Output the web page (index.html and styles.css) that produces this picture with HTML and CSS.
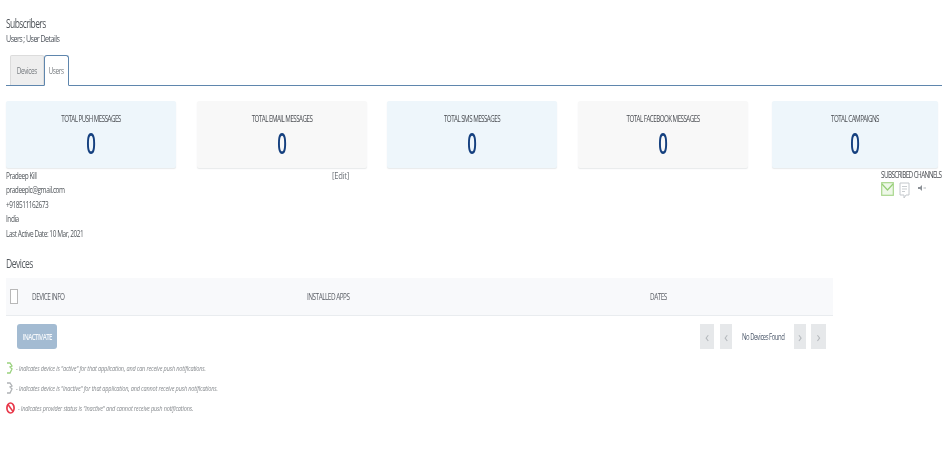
FILE: index.html
```html
<!DOCTYPE html>
<html lang="en">
<head>
<meta charset="utf-8">
<title>Subscribers</title>
<link rel="stylesheet" href="styles.css">
</head>
<body>
<main class="page">
  <header class="head">
    <h1 class="title">Subscribers</h1>
    <div class="crumb">Users ; User Details</div>
  </header>
  <nav class="tabs">
    <a class="tab"><span class="tab-text">Devices</span></a>
    <a class="tab active"><span class="tab-text">Users</span></a>
  </nav>
  <section class="cards">
    <div class="card blue"><div class="card-label">TOTAL PUSH MESSAGES</div><div class="card-num">0</div></div>
    <div class="card grey"><div class="card-label">TOTAL EMAIL MESSAGES</div><div class="card-num">0</div></div>
    <div class="card blue"><div class="card-label">TOTAL SMS MESSAGES</div><div class="card-num">0</div></div>
    <div class="card grey"><div class="card-label">TOTAL FACEBOOK MESSAGES</div><div class="card-num">0</div></div>
    <div class="card blue last"><div class="card-label">TOTAL CAMPAIGNS</div><div class="card-num">0</div></div>
  </section>
  <section class="info">
    <div class="details">
      <div>Pradeep Kill</div>
      <div>pradeeplc@gmail.com</div>
      <div>+918511162673</div>
      <div>India</div>
      <div>Last Active Date: 10 Mar, 2021</div>
    </div>
    <div class="edit">[Edit]</div>
    <div class="channels">
      <div class="channels-label">SUBSCRIBED CHANNELS</div>
      <div class="channels-icons">
        <svg width="13" height="14" viewBox="0 0 13 14"><rect x="0.7" y="0.7" width="11.600" height="12.600" fill="#eef8e8" stroke="#a8d68c" stroke-width="1.200"/><path d="M1 2l5.500 6L12 2" fill="none" stroke="#96ce76" stroke-width="1.200"/></svg>
        <svg width="11" height="17" viewBox="0 0 11 17"><path d="M1 1h9v12H7l-2 3v-3H1z" fill="#fff" stroke="#c4c8cc"/><path d="M3 4.500h5M3 7h5M3 9.500h3" stroke="#c9cdd0"/></svg>
        <svg class="speaker" width="8" height="6" viewBox="0 0 8 6"><path d="M0 2h2l2-2v6L2 4H0z" fill="#8b9096"/><path d="M5.500 3H8" stroke="#b5b9bd"/></svg>
      </div>
    </div>
  </section>
  <h2 class="section-title">Devices</h2>
  <section class="table">
    <div class="check"></div>
    <div class="col col-info">DEVICE INFO</div>
    <div class="col col-apps">INSTALLED APPS</div>
    <div class="col">DATES</div>
  </section>
  <section class="actions">
    <button class="btn"><span class="btn-text">INACTIVATE</span></button>
    <div class="pager">
      <span class="pg first">&#8249;</span>
      <span class="pg">&#8249;</span>
      <span class="pg-text"><span class="pg-label">No Devices Found</span></span>
      <span class="pg">&#8250;</span>
      <span class="pg final">&#8250;</span>
    </div>
  </section>
  <section class="legend">
    <div class="legend-row">
      <svg width="9" height="12" viewBox="0 0 9 12"><path d="M1 1h3l2 3-2 1 2 2-2 4H1" fill="none" stroke="#9ad27e" stroke-width="1.300"/></svg>
      <span class="legend-text">- Indicates device is "active" for that application, and can receive push notifications.</span>
    </div>
    <div class="legend-row">
      <svg width="9" height="12" viewBox="0 0 9 12"><path d="M1 1h3l2 3-2 1 2 2-2 4H1" fill="none" stroke="#b0b3b6" stroke-width="1.300"/></svg>
      <span class="legend-text">- Indicates device is "inactive" for that application, and cannot receive push notifications.</span>
    </div>
    <div class="legend-row">
      <svg width="9" height="12" viewBox="0 0 9 12"><ellipse cx="4.500" cy="6" rx="3.600" ry="5" fill="#fff" stroke="#e8384a" stroke-width="1.700"/><path d="M2 2.500l5 7" stroke="#e8384a" stroke-width="1.500"/></svg>
      <span class="legend-text provider">- Indicates provider status is "inactive" and cannot receive push notifications.</span>
    </div>
  </section>
</main>
</body>
</html>
```
FILE: styles.css
```css
* { box-sizing: border-box; }
html, body { margin: 0; padding: 0; background: #fff; }
body {
  width: 950px;
  height: 461px;
  overflow: hidden;
  font-family: "Open Sans", "Liberation Sans", sans-serif;
  color: #44494e;
}
.page { padding: 16px 8px 0 6px; filter: blur(0.35px); }
.head { height: 38px; }
.title {
  margin: 0;
  font-size: 13px;
  line-height: 15px;
  font-weight: 400;
  letter-spacing: -0.9px;
  color: #50555a;
  transform: scaleX(.65);
  transform-origin: left center;
  white-space: nowrap;
}
.crumb {
  margin-top: 2px;
  font-size: 9.500px;
  line-height: 12px;
  letter-spacing: -0.75px;
  color: #4a5058;
  transform: scaleX(.75);
  transform-origin: left center;
  white-space: nowrap;
}
.tabs {
  display: flex;
  height: 32px;
  padding-top: 1px;
  border-bottom: 1.500px solid #5f86ad;
}
.tab {
  display: flex;
  align-items: center;
  justify-content: center;
  height: 30px;
  font-size: 9.500px;
  letter-spacing: -0.6px;
  color: #777c80;
}
.tab-text { display: inline-block; transform: scaleX(.68); }
.tab:first-child {
  width: 34px;
  margin-left: 4px;
  background: #eeeeee;
  border: 1px solid #dcdcdc;
  border-bottom: 0;
  border-radius: 2px 2px 0 0;
}
.tab.active {
  width: 25px;
  height: 31px;
  background: #fff;
  border: 1.500px solid #5f86ad;
  border-bottom: 1.500px solid #fff;
  border-radius: 3px 3px 0 0;
}
.cards {
  display: grid;
  grid-template-columns: repeat(5, 170px);
  column-gap: 20.500px;
  margin-top: 15px;
  height: 67px;
}
.card {
  height: 67px;
  border-radius: 2px;
  text-align: center;
  padding-top: 12px;
  box-shadow: 0 1px 1px rgba(60, 70, 80, .12);
}
.card.last { margin-left: 4px; }
.blue { background: #eef6fb; }
.grey { background: #f8f8f8; }
.card-label {
  font-size: 8.500px;
  line-height: 11px;
  letter-spacing: -0.72px;
  color: #4a4d52;
  transform: scaleX(.73);
  white-space: nowrap;
}
.card-num {
  margin-top: 4px;
  font-size: 28px;
  line-height: 31px;
  font-weight: 600;
  color: #15407f;
  transform: scaleX(.6);
}
.info {
  display: flex;
  height: 67px;
  margin-top: 1px;
}
.details {
  width: 326px;
  font-size: 9px;
  line-height: 14.400px;
  letter-spacing: -0.62px;
  color: #50555a;
  transform: scaleX(.72);
  transform-origin: left center;
}
.edit {
  padding-top: 1px;
  font-size: 9px;
  line-height: 12px;
  letter-spacing: -0.3px;
  color: #6d7278;
  transform: scaleX(.85);
  transform-origin: left center;
}
.channels { margin-left: auto; width: 61px; }
.channels-label {
  font-size: 8.500px;
  line-height: 12px;
  letter-spacing: -0.82px;
  white-space: nowrap;
  color: #4a4d52;
  transform: scaleX(.75);
  transform-origin: left center;
}
.channels-icons {
  display: flex;
  align-items: flex-start;
  gap: 5px;
  margin-top: 1px;
}
.speaker { margin: 3px 0 0 3px; }
.section-title {
  margin: 19px 0 0;
  font-size: 13px;
  line-height: 16px;
  font-weight: 400;
  letter-spacing: -0.8px;
  color: #565b60;
  transform: scaleX(.66);
  transform-origin: left center;
}
.table {
  display: grid;
  grid-template-columns: 22px 275px 343px 1fr;
  align-items: center;
  width: 827px;
  height: 38px;
  margin-top: 7px;
  padding-left: 4px;
  background: #f8f9fb;
  border-bottom: 1px solid #e9ecef;
}
.check {
  width: 8px;
  height: 15px;
  background: #fff;
  border: 1px solid #b8b8b8;
}
.col {
  font-size: 8.500px;
  letter-spacing: -0.65px;
  color: #5b5f66;
  transform: scaleX(.75);
  transform-origin: left center;
  white-space: nowrap;
}
.actions {
  display: flex;
  justify-content: space-between;
  align-items: center;
  width: 809px;
  height: 25px;
  margin-top: 8px;
  margin-left: 11px;
}
.btn {
  width: 40px;
  height: 25px;
  padding: 0;
  background: #a3bbd2;
  border: 0;
  border-radius: 3px;
  color: #f4f7fa;
  font-family: inherit;
  font-size: 8.500px;
  font-weight: 600;
  letter-spacing: -0.75px;
}
.btn-text { display: inline-block; transform: scaleX(.72); }
.pager { display: flex; align-items: center; gap: 6px; }
.pg {
  display: flex;
  align-items: center;
  justify-content: center;
  width: 12px;
  height: 25px;
  background: #e6e8ea;
  color: #b4b8bc;
  font-size: 14px;
}
.pg.first { width: 14px; }
.pg.final { width: 15px; margin-left: -1px; }
.pg-text {
  display: flex;
  justify-content: center;
  width: 46px;
  margin: 0 2px;
  font-size: 9px;
  letter-spacing: -0.7px;
  white-space: nowrap;
  color: #4e5a6c;
}
.pg-label { display: inline-block; flex: none; transform: scaleX(.66); }
.legend { margin-top: 9px; }
.legend-row {
  display: flex;
  align-items: center;
  gap: 1px;
  height: 20px;
  font-size: 7px;
  font-style: italic;
  letter-spacing: -0.22px;
  color: #85898d;
  white-space: nowrap;
}
.legend-text { display: inline-block; transform: scaleX(.8); transform-origin: left center; }
.legend-text.provider { margin-left: 2px; }
```
